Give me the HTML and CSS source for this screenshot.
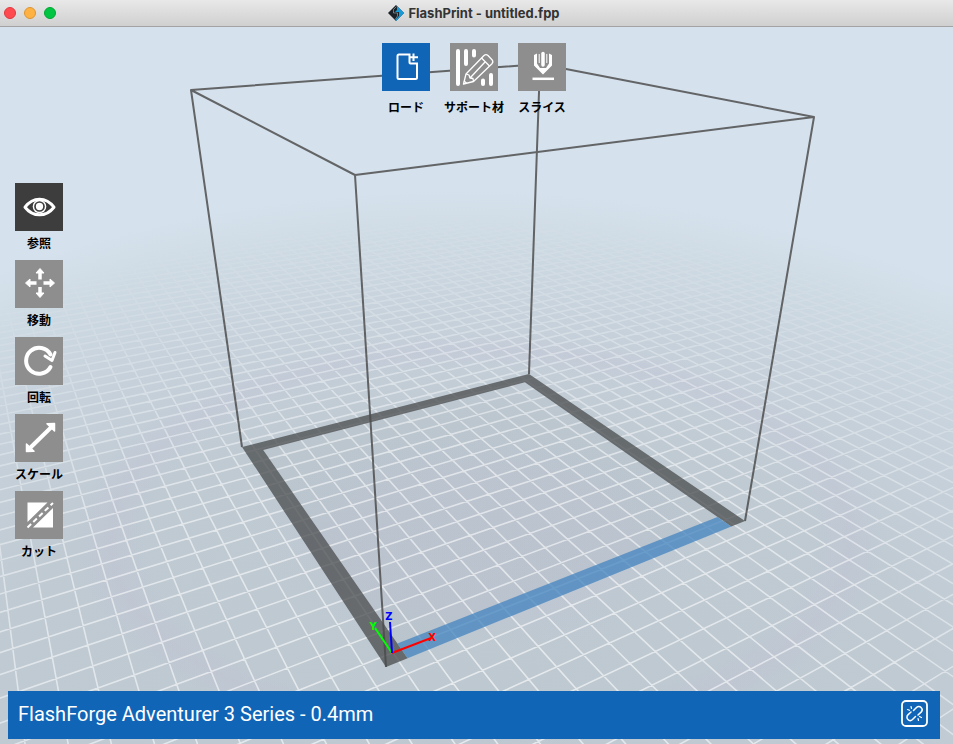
FILE: index.html
```html
<!DOCTYPE html>
<html lang="ja">
<head>
  <meta charset="UTF-8">
  <meta name="viewport" content="width=device-width, initial-scale=1.0">
  <title>FlashPrint - untitled.fpp</title>
  <link rel="stylesheet" href="styles.css">
</head>
<body>
  <header class="titlebar">
    <div class="window-controls">
      <button class="dot close" aria-label="閉じる"></button>
      <button class="dot minimize" aria-label="最小化"></button>
      <button class="dot maximize" aria-label="最大化"></button>
    </div>
    <h1 class="title">
      <svg class="logo" viewBox="0 0 16 16" aria-hidden="true">
        <path d="M8 0 16 8 8 16 0 8Z" fill="#1b2126"/>
        <path d="M9 1 16 8 8 16 7 15 11 11V7H7L9 5Z" fill="#159bd7"/>
        <path d="M8.500 1.500 5.500 4.500V8H9.500V11L7.500 14" fill="none" stroke="#b9d3de" stroke-width="0.500"/>
      </svg>
      FlashPrint - untitled.fpp
    </h1>
  </header>

  <main class="workspace">
    <!-- 3D scene -->
    <svg class="scene" viewBox="0 27 953 717" preserveAspectRatio="xMidYMid slice" aria-hidden="true">
      <defs>
        <radialGradient id="ground" gradientUnits="userSpaceOnUse" cx="0" cy="0" r="1" gradientTransform="translate(460 700) scale(850 510)">
          <stop offset="0" stop-color="#bdc8d0"/>
          <stop offset="0.55" stop-color="#bfcad3"/>
          <stop offset="0.75" stop-color="#c6d1db"/>
          <stop offset="0.9" stop-color="#cedae3"/>
          <stop offset="1" stop-color="#d5e1ec"/>
        </radialGradient>
        <radialGradient id="tint" gradientUnits="userSpaceOnUse" cx="0" cy="0" r="1" gradientTransform="translate(480 540) scale(440 226)">
          <stop offset="0" stop-color="#c4bcd6" stop-opacity="0.12"/>
          <stop offset="0.3" stop-color="#c4bcd6" stop-opacity="0.12"/>
          <stop offset="0.5" stop-color="#c4bcd6" stop-opacity="0"/>
          <stop offset="0.76" stop-color="#c4bcd6" stop-opacity="0"/>
          <stop offset="0.84" stop-color="#c4bcd6" stop-opacity="0.2"/>
          <stop offset="0.92" stop-color="#c4bcd6" stop-opacity="0"/>
        </radialGradient>
        <radialGradient id="fog" gradientUnits="userSpaceOnUse" cx="0" cy="0" r="1" gradientTransform="translate(460 700) scale(850 510)">
          <stop offset="0" stop-color="#fff"/>
          <stop offset="0.5" stop-color="#ddd"/>
          <stop offset="0.7" stop-color="#888"/>
          <stop offset="0.85" stop-color="#333"/>
          <stop offset="0.97" stop-color="#000"/>
        </radialGradient>
        <mask id="fogMask" maskUnits="userSpaceOnUse" x="-400" y="0" width="1800" height="1000">
          <rect x="-400" width="1800" height="1000" fill="url(#fog)"/>
        </mask>
      </defs>
      <rect x="-400" width="1800" height="1000" fill="url(#ground)"/>
      <rect x="-400" width="1800" height="1000" fill="url(#tint)"/>
      <path id="floor" class="floor"/>
      <g mask="url(#fogMask)">
        <path id="grid" class="grid"/>
      </g>
      <path id="frame" class="frame"/>
      <path id="front" class="front"/>
      <path class="box" d="M191 90 355 175 814 117 540 64ZM191 90 242 447M355 175 386 667M814 117 745 521M540 64 529 374"/>
      <g class="axes">
        <path d="M392 653 431 638" stroke="#f00"/>
        <path d="M392 653 375 628" stroke="#0f0"/>
        <path d="M392 653 390 622" stroke="#00f"/>
        <text x="432" y="641" fill="#f00">X</text>
        <text x="373" y="630" fill="#0f0">Y</text>
        <text x="389" y="620" fill="#00f">Z</text>
      </g>
    </svg>

    <nav class="toolbar">
      <button class="tool primary">
        <svg class="icon" viewBox="0 0 48 48">
          <g fill="none" stroke="#fff" stroke-width="2">
            <path d="M27.500 11.500H17a1.500 1.500 0 0 0-1.500 1.500V34.500a1.500 1.500 0 0 0 1.500 1.500H33.500a1.500 1.500 0 0 0 1.500-1.500V20.500H28.500a1 1 0 0 1-1-1Z"/>
            <path d="M31.500 10.500V18M28 14.200H36"/>
          </g>
        </svg>
        <span class="label">ロード</span>
      </button>
      <button class="tool">
        <svg class="icon" viewBox="0 0 48 48">
          <path d="M8 8V41M16 8V21M24 8V12.500M33 37.500V41M41 32V41" stroke="#fff" stroke-width="4" stroke-linecap="round"/>
          <g fill="none" stroke="#fff" stroke-width="1.300" stroke-linejoin="round">
            <path d="M13.500 41 16 31 34 12.500Q36 10.700 38 12.500L42 16.700Q43.700 18.700 42 20.700L23.500 38.500Z"/>
            <path d="M16 31 19 32 20 35 23 35.500 23.500 38.500M31.500 15 39.500 23M20 35 35 19M14 38 16.500 40"/>
          </g>
        </svg>
        <span class="label">サポート材</span>
      </button>
      <button class="tool">
        <svg class="icon" viewBox="0 0 48 48">
          <path d="M16 12 19 10.500V20.500L22 25H28L31 20.500V10.500L34 12V22.500L25 31.500 16 22.500Z" fill="#fff"/>
          <path d="M25 10.500V22" stroke="#fff" stroke-width="3.500" stroke-linecap="round"/>
          <path d="M21.200 11V20M28.800 11V20" stroke="#fff" stroke-width="1"/>
          <path d="M14.500 35.800H36" stroke="#fff" stroke-width="2.500"/>
        </svg>
        <span class="label">スライス</span>
      </button>
    </nav>

    <nav class="sidebar">
      <button class="tool active">
        <svg class="icon" viewBox="0 0 48 48">
          <path d="M10 24.200Q16 16.200 24.500 16.200T39 24.200Q33 31.800 24.500 31.800T10 24.200Z" fill="none" stroke="#fff" stroke-width="3" stroke-linejoin="round"/>
          <circle cx="24.500" cy="23.500" r="6.800" fill="#fff"/>
          <circle cx="24.500" cy="23.500" r="4.500" fill="none" stroke="#3d3d3d" stroke-width="1.700"/>
        </svg>
        <span class="label">参照</span>
      </button>
      <button class="tool">
        <svg class="icon" viewBox="0 0 48 48">
          <path d="M25 19.500V12M25 27V34M21.500 23H14M28.500 23H36" stroke="#fff" stroke-width="3.500"/>
          <path d="M25 8.500 29 13H21ZM25 37.500 29 33H21ZM10.500 23 15 19V27ZM39.500 23 35 19V27Z" fill="#fff" stroke="#fff" stroke-linejoin="round"/>
        </svg>
        <span class="label">移動</span>
      </button>
      <button class="tool">
        <svg class="icon" viewBox="0 0 48 48">
          <path d="M35.500 30A13 13 0 1 1 35.500 17.500" fill="none" stroke="#fff" stroke-width="4" stroke-linecap="round"/>
          <path d="M30 19 37 23.500 40 15.500" fill="none" stroke="#fff" stroke-width="3" stroke-linecap="round" stroke-linejoin="round"/>
        </svg>
        <span class="label">回転</span>
      </button>
      <button class="tool">
        <svg class="icon" viewBox="0 0 48 48">
          <path d="M15 34 36.500 13" stroke="#fff" stroke-width="4"/>
          <path d="M39.500 9.500V17L32 9.700ZM11.500 37.500V30L19 37.300Z" fill="#fff" stroke="#fff" stroke-width="1.500" stroke-linejoin="round"/>
        </svg>
        <span class="label">スケール</span>
      </button>
      <button class="tool">
        <svg class="icon" viewBox="0 0 48 48">
          <path d="M12.500 11.500H32.500L12.500 31ZM38 17V36.500H18Z" fill="#fff"/>
          <path d="M12.500 36.500 38 12" stroke="#fff" stroke-width="2" stroke-dasharray="5 3"/>
        </svg>
        <span class="label">カット</span>
      </button>
    </nav>

    <footer class="status">
      <span>FlashForge Adventurer 3 Series - 0.4mm</span>
      <button class="connect" aria-label="接続">
        <svg viewBox="0 0 27 27">
          <g fill="none" stroke="#fff" stroke-linecap="round">
            <rect x="1" y="1" width="25" height="25" rx="4" stroke-width="1.800"/>
            <path d="M12.500 10.500 15.500 7.500a3.200 3.200 0 0 1 4.600 4.600L17 15M14.500 16.500 11.500 19.500a3.200 3.200 0 0 1-4.600-4.600L10 12" stroke-width="1.500"/>
            <path d="M10 6.500 10.500 8.500M6.500 9.500 8.500 10.300M17 18.500 17.500 20.500M18.500 16.500 20.500 17.500" stroke-width="1.200"/>
          </g>
        </svg>
      </button>
    </footer>
  </main>

  <script src="scene.js"></script>
</body>
</html>
```
FILE: styles.css
```css
* {
  box-sizing: border-box;
}

body {
  margin: 0;
  min-height: 100vh;
  display: flex;
  flex-direction: column;
  font-family: Inter, "Noto Sans CJK JP", sans-serif;
  background: #d5e1ec;
}

button {
  padding: 0;
  border: none;
  background: none;
  font: inherit;
  cursor: pointer;
}

svg {
  display: block;
}

/* Title bar */
.titlebar {
  display: grid;
  grid-template-columns: 1fr auto 1fr;
  align-items: center;
  height: 27px;
  padding: 0 9px 0 4px;
  background: linear-gradient(#e8e8e8, #d0d0d0);
  border-bottom: 1px solid #a3a3a3;
}

.window-controls {
  display: flex;
  gap: 8px;
}

.dot {
  width: 12px;
  height: 12px;
  border-radius: 50%;
}

.close {
  background: #ff4b50;
  border: 1px solid #e0383e;
}

.minimize {
  background: #ffb244;
  border: 1px solid #dd9433;
}

.maximize {
  background: #00c543;
  border: 1px solid #00a732;
}

.title {
  display: flex;
  align-items: center;
  gap: 4px;
  margin: 0;
  font-size: 13px;
  font-weight: 700;
  line-height: 16px;
  color: #333;
}

.logo {
  width: 16px;
  height: 16px;
}

/* Workspace */
.workspace {
  position: relative;
  flex: 1;
  display: flex;
  flex-direction: column;
  overflow: hidden;
}

.scene {
  position: absolute;
  inset: 0;
  width: 100%;
  height: 100%;
}

.floor {
  fill: rgba(140, 140, 160, 0.06);
}

.grid {
  fill: none;
  stroke: rgba(255, 255, 255, 0.62);
  stroke-width: 1.6;
}

.frame {
  fill: #4c4e50;
  fill-opacity: 0.77;
}

.front {
  fill: #4585bf;
  fill-opacity: 0.77;
}

.box {
  fill: none;
  stroke: #4b4b4b;
  stroke-opacity: 0.83;
  stroke-width: 2;
  stroke-linejoin: round;
}

.axes {
  fill: none;
  stroke-width: 2;
  font: bold 10px "DejaVu Sans", sans-serif;
  text-anchor: middle;
}

.axes text {
  stroke: none;
}

/* Tools */
.toolbar,
.sidebar,
.status {
  position: relative;
}

.toolbar {
  display: flex;
  justify-content: center;
  gap: 20px;
  padding: 16px 5px 0 0;
}

.sidebar {
  display: flex;
  flex-direction: column;
  align-items: flex-start;
  gap: 9px;
  margin: 68px 0 24px 15px;
}

.tool {
  display: flex;
  flex-direction: column;
  align-items: center;
  gap: 4px;
  width: 48px;
}

.toolbar .tool {
  gap: 8px;
}

.icon {
  width: 48px;
  height: 48px;
  background: #8e8e8e;
}

.primary .icon {
  background: #1065b7;
}

.active .icon {
  background: #3d3d3d;
}

.label {
  font-family: "Noto Sans CJK JP", sans-serif;
  font-size: 12px;
  font-weight: 700;
  line-height: 16px;
  color: #000;
  white-space: nowrap;
}

/* Status bar */
.status {
  display: flex;
  align-items: center;
  justify-content: space-between;
  height: 48px;
  margin: auto 13px 5px 8px;
  padding: 0 12px 3px 10px;
  background: #1065b7;
  color: #fff;
  font-family: Roboto, sans-serif;
  font-size: 20px;
  font-weight: 400;
}

.connect svg {
  width: 27px;
  height: 27px;
}
```
FILE: scene.js
```js
// Perspective projection of the build plate, (0,0) is the front corner
function depth(u, v) {
  return 1 + 0.2708 * u + 0.4547 * v;
}

function project(u, v) {
  const w = depth(u, v);
  const x = (386 + 560.7 * u - 33.97 * v) / w;
  const y = (667 - 4.9 * u - 16.75 * v) / w;
  return x.toFixed(1) + ' ' + y.toFixed(1);
}

function polygon(points) {
  return 'M' + points.map(p => project(p[0], p[1])).join('L') + 'Z';
}

function rect(a, b) {
  return polygon([[a, a], [b, a], [b, b], [a, b]]);
}

const near = 0.4;
const far = 7;
const start = 0.029;
const step = 0.0668;
const edge = 0.048;

let grid = '';
for (let i = -110; i <= 100; i++) {
  const t = start + i * step;

  // lines going away to the left
  const v0 = (near - 1 - 0.2708 * t) / 0.4547;
  if (v0 < far) grid += 'M' + project(t, v0) + 'L' + project(t, far);

  // lines going away to the right
  const u0 = (near - 1 - 0.4547 * t) / 0.2708;
  if (u0 < far) grid += 'M' + project(u0, t) + 'L' + project(far, t);
}

document.getElementById('grid').setAttribute('d', grid);
document.getElementById('floor').setAttribute('d', rect(edge, 1 - edge));

// dark frame on three sides, blue strip on the front one
document.getElementById('frame').setAttribute('d', polygon([
  [0, 0], [edge, 0], [edge, 1 - edge], [1 - edge, 1 - edge],
  [1 - edge, 0], [1, 0], [1, 1], [0, 1]
]));
document.getElementById('front').setAttribute('d', polygon([
  [edge, 0], [1 - edge, 0], [1 - edge, edge], [edge, edge]
]));
```
